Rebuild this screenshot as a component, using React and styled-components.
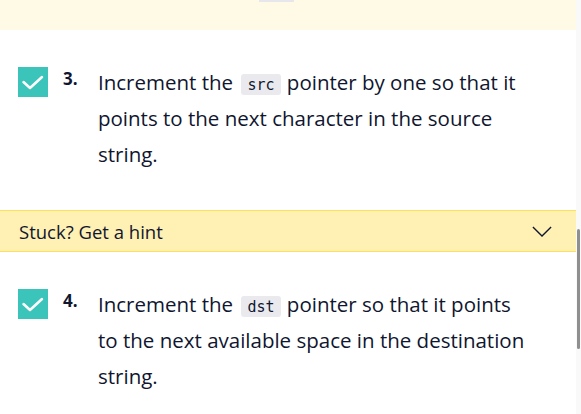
import React from "react";
import styled, { createGlobalStyle } from "styled-components";

const GlobalStyle = createGlobalStyle`
  html, body {
    margin: 0;
    padding: 0;
    background: #fff;
  }
  body {
    font-family: "Open Sans", sans-serif;
    color: #10162f;
  }
`;

const steps = [
  {
    num: 3,
    before: "Increment the ",
    code: "src",
    after: " pointer by one so that it points to the next character in the source string.",
  },
  {
    num: 4,
    before: "Increment the ",
    code: "dst",
    after: " pointer so that it points to the next available space in the destination string.",
  },
];

const App = () => {
  return (
    <>
      <GlobalStyle />
      <Page>
        <Main>
          <TopBand>
            <CutChip />
          </TopBand>

          <Step {...steps[0]} />

          <HintBar>
            <span>Stuck? Get a hint</span>
            <Chevron viewBox="0 0 22 12">
              <path d="M1 1 L11 11 L21 1" />
            </Chevron>
          </HintBar>

          <Step {...steps[1]} />
        </Main>
        <Track>
          <Thumb />
        </Track>
      </Page>
    </>
  );
};

const Step = ({ num, before, code, after }) => (
  <StepRow>
    <CheckBox>
      <svg viewBox="0 0 30 30" width="30" height="30">
        <path d="M5.5 15 L12 21 L24 10" />
      </svg>
    </CheckBox>
    <Num>{num}.</Num>
    <StepText>
      {before}
      <Code>{code}</Code>
      {after}
    </StepText>
  </StepRow>
);

export default App;

const Page = styled.div`
  display: flex;
  width: 581px;
  height: 414px;
  overflow: hidden;
`;

const Main = styled.div`
  flex: 1;
  display: flex;
  flex-direction: column;
`;

const Track = styled.div`
  width: 5px;
  background: #f9f9f9;
  position: relative;
`;

const Thumb = styled.div`
  position: absolute;
  top: 229px;
  left: 1px;
  width: 3px;
  height: 120px;
  border-radius: 2px;
  background: #8f8f8f;
`;

const TopBand = styled.div`
  height: 30px;
  background: #fffae6;
  position: relative;
`;

const CutChip = styled.div`
  position: absolute;
  top: 0;
  left: 259px;
  width: 35px;
  height: 2px;
  background: #e6e6ec;
`;

const StepRow = styled.div`
  display: flex;
  align-items: flex-start;
  padding: 37px 49px 0 18px;
  height: 143px;
  box-sizing: border-box;
`;

const CheckBox = styled.div`
  flex: none;
  width: 30px;
  height: 30px;
  background: #3bc4b9;
  svg {
    display: block;
    fill: none;
    stroke: #fff;
    stroke-width: 2.5;
    stroke-linecap: round;
    stroke-linejoin: round;
  }
`;

const Num = styled.div`
  flex: none;
  width: 35px;
  margin-left: 15px;
  font-weight: 700;
  font-size: 17px;
  line-height: 30px;
  margin-top: -3px;
`;

const StepText = styled.p`
  flex: 1;
  margin: -3px 0 0;
  font-size: 20.5px;
  line-height: 36px;
`;

const Code = styled.code`
  font-family: "DejaVu Sans Mono", monospace;
  font-size: 15px;
  line-height: 1;
  background: #eaeaee;
  border-radius: 3px;
  padding: 2px 6px 1px;
  margin: 0 1px 0 3px;
  color: #10162f;
`;

const HintBar = styled.div`
  display: flex;
  align-items: center;
  justify-content: space-between;
  height: 40px;
  margin-top: 37px;
  padding: 0 24px 0 19px;
  background: #fff0b3;
  border-top: 1px solid #ffe058;
  border-bottom: 1px solid #ffe058;
  font-size: 18.5px;
`;

const Chevron = styled.svg`
  width: 20px;
  height: 11px;
  fill: none;
  stroke: #10162f;
  stroke-width: 1.5;
`;
